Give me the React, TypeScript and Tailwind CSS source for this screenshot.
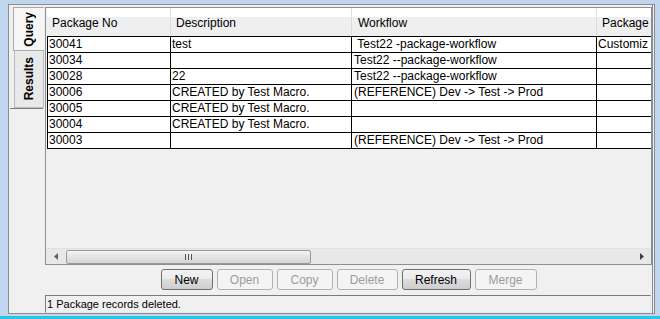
import React from 'react'

interface Row {
  no: string
  description: string
  workflow: string
  pkg: string
}

const rows: Row[] = [
  { no: '30041', description: 'test', workflow: '\u00a0Test22 -package-workflow', pkg: 'Customiz' },
  { no: '30034', description: '', workflow: 'Test22 --package-workflow', pkg: '' },
  { no: '30028', description: '22', workflow: 'Test22 --package-workflow', pkg: '' },
  { no: '30006', description: 'CREATED by Test Macro.', workflow: '(REFERENCE) Dev -> Test -> Prod', pkg: '' },
  { no: '30005', description: 'CREATED by Test Macro.', workflow: '', pkg: '' },
  { no: '30004', description: 'CREATED by Test Macro.', workflow: '', pkg: '' },
  { no: '30003', description: '', workflow: '(REFERENCE) Dev -> Test -> Prod', pkg: '' },
]

const buttons = [
  { label: 'New', width: 'w-[52px]', enabled: true },
  { label: 'Open', width: 'w-[56px]', enabled: false },
  { label: 'Copy', width: 'w-[56px]', enabled: false },
  { label: 'Delete', width: 'w-[61px]', enabled: false },
  { label: 'Refresh', width: 'w-[69px]', enabled: true },
  { label: 'Merge', width: 'w-[62px]', enabled: false },
]

export default function App() {
  return (
    <div className="w-[660px] h-[319px] bg-[#bfd6ee] flex flex-col font-['Liberation_Sans',Arial,sans-serif] text-black overflow-hidden">
      <div className="flex-1 flex flex-col pt-[4px] pl-[8px] pr-[5px] pb-[2px] min-h-0">
        {/* Window body */}
        <div className="flex-1 flex min-h-0 bg-[#f0f0f0] border-l border-t border-b border-[#8c8c8c] border-r-[3px] border-r-[#8c8c8c] [border-right-style:double]">
          {/* Vertical tabs */}
          <div className="w-[36px] flex flex-col pt-[2px] pl-[4px]">
            <div className="h-[44px] w-[31px] bg-[#f6f6f6] border border-r-0 border-[#a9a9a9] flex items-center justify-center">
              <span className="[writing-mode:vertical-rl] rotate-180 font-bold text-[12px] leading-none">Query</span>
            </div>
            <div className="h-[57px] w-[30px] ml-[1px] bg-[#e9e9e9] border border-t-0 border-[#bcbcbc] flex items-center justify-center">
              <span className="[writing-mode:vertical-rl] rotate-180 font-bold text-[12px] leading-none">Results</span>
            </div>
            <div className="h-[1px] w-[33px] -ml-[3px] bg-[#808080]" />
          </div>

          {/* Main column */}
          <div className="flex-1 flex flex-col pt-[2px] min-w-0">
            {/* Table frame */}
            <div className="h-[258px] border border-[#8c8f95] flex flex-col bg-[#f0f0f0] overflow-hidden">
              <div className="flex-1 pl-[1px] overflow-hidden">
                {/* Header */}
                <div className="flex h-[29px] border-b border-black bg-[linear-gradient(#ffffff_0,#ffffff_9px,#efefef_9px,#efefef_100%)] text-[12px]">
                  <div className="w-[124px] shrink-0 border-r border-[#dcdcdc] pl-[5px] flex items-center pt-[1px]">Package No</div>
                  <div className="w-[181px] shrink-0 border-r border-[#dcdcdc] pl-[5px] flex items-center pt-[1px]">Description</div>
                  <div className="w-[245px] shrink-0 border-r border-[#dcdcdc] pl-[6px] flex items-center pt-[1px]">Workflow</div>
                  <div className="w-[54px] shrink-0 pl-[5px] flex items-center pt-[1px] whitespace-nowrap">Package</div>
                </div>
                {/* Rows */}
                {rows.map((r) => (
                  <div key={r.no} className="flex h-[16px] border-b border-black bg-white text-[12px] leading-[15px] whitespace-nowrap">
                    <div className="w-[124px] shrink-0 border-l border-r border-black pl-[1px] overflow-hidden">{r.no}</div>
                    <div className="w-[181px] shrink-0 border-r border-black pl-[1px] overflow-hidden">{r.description}</div>
                    <div className="w-[245px] shrink-0 border-r border-black pl-[2px] overflow-hidden">{r.workflow}</div>
                    <div className="w-[54px] shrink-0 pl-[1px] overflow-hidden">{r.pkg}</div>
                  </div>
                ))}
              </div>

              {/* Horizontal scrollbar */}
              <div className="h-[16px] shrink-0 flex items-center bg-[#e8e8e8] border-t border-[#e0e0e0]">
                <div className="w-[20px] flex items-center justify-center">
                  <svg width="4" height="7" viewBox="0 0 4 7"><path d="M4 0 L0 3.5 L4 7 Z" fill="#606060" /></svg>
                </div>
                <div className="w-[245px] h-[14px] rounded-[2px] border border-[#9a9a9a] bg-[linear-gradient(#f4f4f4,#e3e3e3_50%,#d6d6d6)] flex items-center justify-center">
                  <div className="flex gap-[2px]">
                    <div className="w-[1px] h-[6px] bg-[#555]" />
                    <div className="w-[1px] h-[6px] bg-[#555]" />
                    <div className="w-[1px] h-[6px] bg-[#555]" />
                  </div>
                </div>
                <div className="flex-1" />
                <div className="w-[18px] flex items-center justify-center">
                  <svg width="4" height="7" viewBox="0 0 4 7"><path d="M0 0 L4 3.5 L0 7 Z" fill="#404040" /></svg>
                </div>
              </div>
            </div>

            {/* Buttons */}
            <div className="flex justify-center gap-[4px] mt-[4px]">
              {buttons.map((b) => (
                <button
                  key={b.label}
                  className={
                    b.enabled
                      ? `${b.width} h-[21px] rounded-[3px] border border-[#707070] bg-[linear-gradient(#f2f2f2,#ebebeb_50%,#dddddd_50%,#cfcfcf)] text-[12px] text-black`
                      : `${b.width} h-[21px] rounded-[3px] border border-[#adb2b5] bg-[#f4f4f4] text-[12px] text-[#9c9c9c]`
                  }
                >
                  {b.label}
                </button>
              ))}
            </div>

            {/* Status bar */}
            <div className="mt-[5px] h-[18px] mr-[1px] border-t border-l border-[#7a7a7a] border-b border-r border-b-[#e8e8e8] border-r-[#e8e8e8] bg-[#f0f0f0] text-[11px] leading-[16px] pl-[1px]">
              1 Package records deleted.
            </div>
          </div>
        </div>
      </div>
      <div className="h-[3px] bg-[#28c4ea]" />
    </div>
  )
}
